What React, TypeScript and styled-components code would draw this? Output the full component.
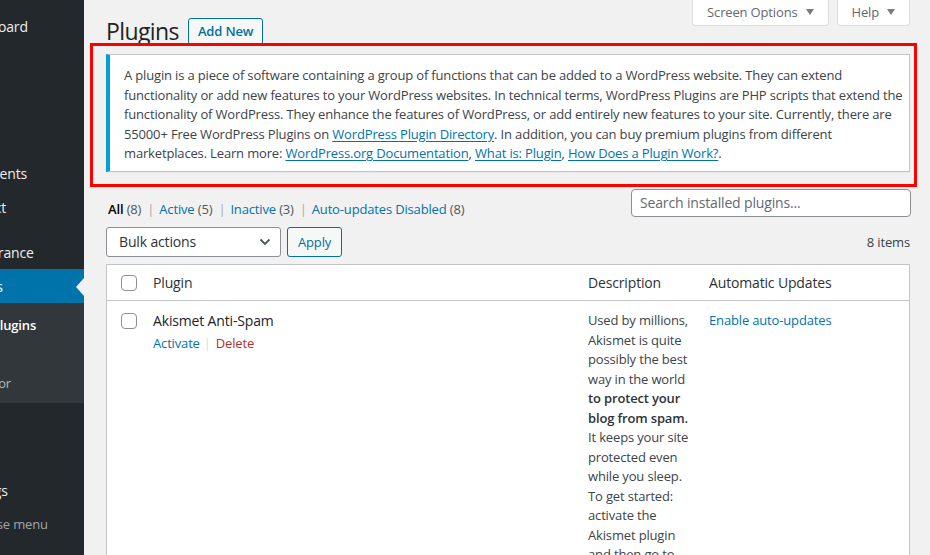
import React from "react";
import styled, { createGlobalStyle } from "styled-components";

const GlobalStyle = createGlobalStyle`
  html, body { margin: 0; padding: 0; }
  body {
    background: #f1f1f1;
    font-family: "Open Sans", "Noto Sans", sans-serif;
    font-size: 13px;
    letter-spacing: -0.012em;
    color: #3c434a;
    overflow: hidden;
  }
  * { box-sizing: border-box; }
`;

const Page = styled.div`
  display: flex;
  width: 930px;
  height: 555px;
  overflow: hidden;
`;

/* ---------- Sidebar ---------- */
const Sidebar = styled.nav`
  position: relative;
  flex: 0 0 84px;
  width: 84px;
  background: #23282d;
  overflow: hidden;
`;

const Menu = styled.ul`
  list-style: none;
  margin: 0 0 0 -76px;
  padding: 9px 0 0;
  width: 160px;
`;

const MenuItem = styled.li<{ $active?: boolean; $gapBefore?: number; $muted?: boolean }>`
  height: 34px;
  display: flex;
  align-items: center;
  padding-left: ${(p) => (p.$muted ? 36 : 33)}px;
  margin-top: ${(p) => p.$gapBefore ?? 0}px;
  font-size: ${(p) => (p.$muted ? 13 : 14)}px;
  white-space: nowrap;
  color: ${(p) => (p.$muted ? "#a0a5aa" : "#eeeeee")};
  background: ${(p) => (p.$active ? "#0073aa" : "transparent")};
  ${(p) => p.$active && "color: #ffffff;"}
`;

const SubMenu = styled.ul`
  list-style: none;
  margin: 0;
  padding: 7px 0 6px;
  background: #32373c;
`;

const SubItem = styled.li<{ $current?: boolean }>`
  height: 29px;
  display: flex;
  align-items: center;
  padding-left: 12px;
  white-space: nowrap;
  font-size: 13px;
  font-weight: ${(p) => (p.$current ? 600 : 400)};
  color: ${(p) => (p.$current ? "#ffffff" : "#b4b9be")};
`;

const CurrentArrow = styled.span`
  position: absolute;
  right: 0;
  top: 278px;
  width: 0;
  height: 0;
  border-top: 9px solid transparent;
  border-bottom: 9px solid transparent;
  border-right: 8px solid #f1f1f1;
`;

/* ---------- Main ---------- */
const Main = styled.main`
  flex: 1;
  padding-left: 22px;
  padding-right: 20px;
  min-width: 0;
`;

const TopBar = styled.div`
  display: flex;
  justify-content: space-between;
  align-items: flex-start;
`;

const TitleRow = styled.div`
  display: flex;
  align-items: center;
  gap: 9px;
  height: 30px;
  margin-top: 16px;
`;

const Title = styled.h1`
  margin: 0;
  font-size: 23px;
  font-weight: 400;
  line-height: 30px;
  letter-spacing: -0.6px;
  color: #1d2327;
`;

const OutlineButton = styled.button<{ $height?: number }>`
  height: ${(p) => p.$height ?? 27}px;
  padding: 0 10px;
  border: 1px solid #0071a1;
  border-radius: 3px;
  background: #f6f7f7;
  color: #0071a1;
  font-family: inherit;
  font-size: 13px;
  letter-spacing: inherit;
  line-height: 1;
  cursor: pointer;
`;

const AddNewButton = styled(OutlineButton)`
  font-weight: 600;
  padding: 0 9px;
`;

const ScreenMeta = styled.div`
  display: flex;
  gap: 8px;
`;

const MetaTab = styled.button`
  height: 26px;
  display: flex;
  align-items: center;
  gap: 8px;
  padding: 0 14px 2px 14px;
  border: 1px solid #dcdcde;
  border-top: none;
  border-radius: 0 0 4px 4px;
  background: #ffffff;
  color: #646970;
  font-family: inherit;
  font-size: 13px;
  letter-spacing: inherit;
`;

const Caret = styled.span`
  width: 0;
  height: 0;
  border-left: 4px solid transparent;
  border-right: 4px solid transparent;
  border-top: 6px solid #787c82;
  margin-top: 1px;
`;

const NoticeFrame = styled.div`
  position: relative;
  margin-top: 8px;
  margin-bottom: 17px;
  &::after {
    content: "";
    position: absolute;
    top: -11px;
    left: -16px;
    right: -7px;
    bottom: -15px;
    border: 3px solid #ff0000;
    pointer-events: none;
  }
`;

const Notice = styled.div`
  background: #ffffff;
  border: 1px solid #c3c4c7;
  border-left: 4px solid #00a0d2;
  box-shadow: 0 1px 1px rgba(0, 0, 0, 0.04);
  padding: 11px 12px 7px 14px;
  line-height: 19.5px;
  white-space: nowrap;
  color: #3c434a;
`;

const Link = styled.a<{ $underline?: boolean; $danger?: boolean }>`
  color: ${(p) => (p.$danger ? "#b32d2e" : "#0073aa")};
  text-decoration: ${(p) => (p.$underline ? "underline" : "none")};
  text-underline-offset: 2px;
`;

const FilterRow = styled.div`
  display: flex;
  justify-content: space-between;
  align-items: flex-start;
`;

const Filters = styled.ul`
  list-style: none;
  margin: 11px 0 0 2px;
  padding: 0;
  display: flex;
  line-height: 19.5px;
`;

const FilterItem = styled.li`
  color: #50575e;
  white-space: nowrap;
`;

const Sep = styled.span`
  color: #a7aaad;
  margin: 0 5px 0 6px;
`;

const Current = styled.span`
  color: #000000;
  font-weight: 600;
`;

const Count = styled.span`
  color: #50575e;
`;

const SearchInput = styled.input`
  width: 280px;
  height: 28px;
  margin-right: -1px;
  padding: 0 8px;
  border: 1px solid #8c8f94;
  border-radius: 4px;
  background: #ffffff;
  font-family: inherit;
  font-size: 14px;
  letter-spacing: inherit;
  &::placeholder { color: #646970; }
`;

const TableNav = styled.div`
  display: flex;
  align-items: center;
  gap: 6px;
  margin-top: 8px;
  height: 30px;
`;

const SelectBox = styled.div`
  width: 175px;
  height: 30px;
  display: flex;
  align-items: center;
  justify-content: space-between;
  padding: 0 9px 1px 12px;
  border: 1px solid #8c8f94;
  border-radius: 3px;
  background: #ffffff;
  color: #2c3338;
  font-size: 14px;
`;

const ItemCount = styled.span`
  margin-left: auto;
  color: #3c434a;
`;

const Table = styled.div`
  margin-top: 7px;
  background: #ffffff;
  border: 1px solid #c3c4c7;
  box-shadow: 0 1px 1px rgba(0, 0, 0, 0.04);
`;

const TableRow = styled.div<{ $head?: boolean }>`
  display: grid;
  grid-template-columns: 38px 435px 121px 1fr;
  ${(p) => p.$head && "border-bottom: 1px solid #c3c4c7; height: 36px; align-items: center;"}
`;

const Cell = styled.div<{ $head?: boolean }>`
  padding: ${(p) => (p.$head ? "0 8px" : "10px 8px 0")};
  font-size: ${(p) => (p.$head ? 14 : 13)}px;
  line-height: ${(p) => (p.$head ? "20px" : "19.5px")};
  color: ${(p) => (p.$head ? "#2c3338" : "#3c434a")};
  white-space: nowrap;
`;

const CheckCell = styled.div<{ $head?: boolean }>`
  padding: ${(p) => (p.$head ? "0 0 0 14px" : "12px 0 0 14px")};
  display: flex;
  align-items: ${(p) => (p.$head ? "center" : "flex-start")};
`;

const Checkbox = styled.span`
  display: block;
  width: 16px;
  height: 16px;
  border: 1px solid #8c8f94;
  border-radius: 4px;
  background: #ffffff;
`;

const PluginName = styled.div`
  font-size: 14px;
  line-height: 20px;
  color: #1d2327;
`;

const RowActions = styled.div`
  margin-top: 3px;
  line-height: 19.5px;
`;

const ActionSep = styled.span`
  color: #dcdcde;
  margin: 0 5px 0 4px;
`;

const Strong = styled.strong`
  font-weight: 600;
  color: #2c3338;
`;

export default function App() {
  return (
    <>
      <GlobalStyle />
      <Page>
        <Sidebar>
          <Menu>
            <MenuItem>Dashboard</MenuItem>
            <MenuItem $gapBefore={11}>Posts</MenuItem>
            <MenuItem>Media</MenuItem>
            <MenuItem>Pages</MenuItem>
            <MenuItem>Comments</MenuItem>
            <MenuItem>Contact</MenuItem>
            <MenuItem $gapBefore={11}>Appearance</MenuItem>
            <MenuItem $active>Plugins</MenuItem>
            <SubMenu>
              <SubItem $current>Installed Plugins</SubItem>
              <SubItem>Add New</SubItem>
              <SubItem>Plugin Editor</SubItem>
            </SubMenu>
            <MenuItem>Users</MenuItem>
            <MenuItem>Tools</MenuItem>
            <MenuItem $gapBefore={2}>Settings</MenuItem>
            <MenuItem $muted>Collapse menu</MenuItem>
          </Menu>
          <CurrentArrow />
        </Sidebar>

        <Main>
          <TopBar>
            <TitleRow>
              <Title>Plugins</Title>
              <AddNewButton>Add New</AddNewButton>
            </TitleRow>
            <ScreenMeta>
              <MetaTab>
                Screen Options <Caret />
              </MetaTab>
              <MetaTab>
                Help <Caret />
              </MetaTab>
            </ScreenMeta>
          </TopBar>

          <NoticeFrame>
            <Notice>
              A plugin is a piece of software containing a group of functions that can be added to a WordPress website. They can extend
              <br />
              functionality or add new features to your WordPress websites. In technical terms, WordPress Plugins are PHP scripts that extend the
              <br />
              functionality of WordPress. They enhance the features of WordPress, or add entirely new features to your site. Currently, there are
              <br />
              55000+ Free WordPress Plugins on <Link $underline href="#">WordPress Plugin Directory</Link>. In addition, you can buy premium plugins from different
              <br />
              marketplaces. Learn more: <Link $underline href="#">WordPress.org Documentation</Link>,{" "}
              <Link $underline href="#">What is: Plugin</Link>, <Link $underline href="#">How Does a Plugin Work?</Link>.
            </Notice>
          </NoticeFrame>

          <FilterRow>
            <Filters>
              <FilterItem>
                <Current>All</Current> <Count>(8)</Count>
                <Sep>|</Sep>
              </FilterItem>
              <FilterItem>
                <Link href="#">Active</Link> <Count>(5)</Count>
                <Sep>|</Sep>
              </FilterItem>
              <FilterItem>
                <Link href="#">Inactive</Link> <Count>(3)</Count>
                <Sep>|</Sep>
              </FilterItem>
              <FilterItem>
                <Link href="#">Auto-updates Disabled</Link> <Count>(8)</Count>
              </FilterItem>
            </Filters>
            <SearchInput placeholder="Search installed plugins..." />
          </FilterRow>

          <TableNav>
            <SelectBox>
              Bulk actions
              <svg width="12" height="8" viewBox="0 0 12 8" aria-hidden="true">
                <path d="M1.5 1.5 L6 6 L10.5 1.5" fill="none" stroke="#50575e" strokeWidth="1.8" />
              </svg>
            </SelectBox>
            <OutlineButton $height={30}>Apply</OutlineButton>
            <ItemCount>8 items</ItemCount>
          </TableNav>

          <Table>
            <TableRow $head>
              <CheckCell $head>
                <Checkbox />
              </CheckCell>
              <Cell $head>Plugin</Cell>
              <Cell $head>Description</Cell>
              <Cell $head>Automatic Updates</Cell>
            </TableRow>
            <TableRow>
              <CheckCell>
                <Checkbox />
              </CheckCell>
              <Cell>
                <PluginName>Akismet Anti-Spam</PluginName>
                <RowActions>
                  <Link href="#">Activate</Link>
                  <ActionSep>|</ActionSep>
                  <Link $danger href="#">Delete</Link>
                </RowActions>
              </Cell>
              <Cell>
                Used by millions,
                <br />
                Akismet is quite
                <br />
                possibly the best
                <br />
                way in the world
                <br />
                <Strong>
                  to protect your
                  <br />
                  blog from spam.
                </Strong>
                <br />
                It keeps your site
                <br />
                protected even
                <br />
                while you sleep.
                <br />
                To get started:
                <br />
                activate the
                <br />
                Akismet plugin
                <br />
                and then go to
                <br />
                your Akismet
                <br />
                Settings page to
              </Cell>
              <Cell>
                <Link href="#">Enable auto-updates</Link>
              </Cell>
            </TableRow>
          </Table>
        </Main>
      </Page>
    </>
  );
}
